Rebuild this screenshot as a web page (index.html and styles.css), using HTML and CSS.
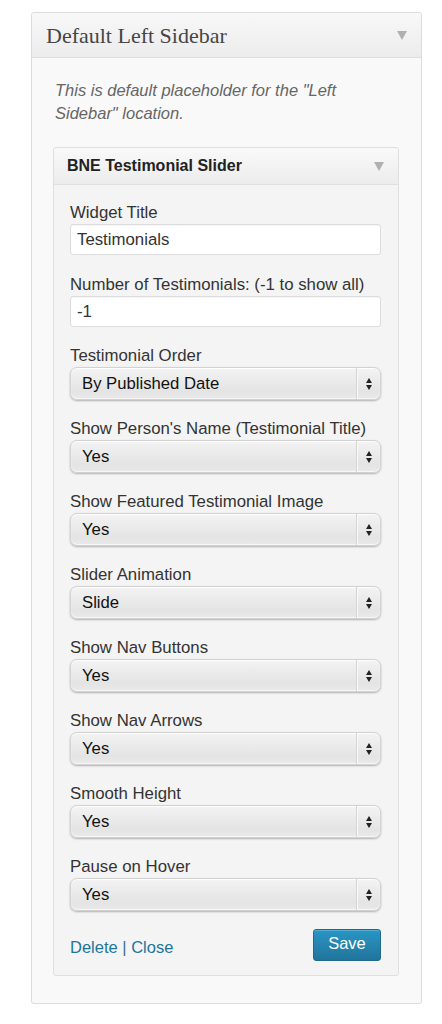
FILE: index.html
```html
<!DOCTYPE html>
<html>
<head>
<meta charset="utf-8">
<link rel="stylesheet" href="styles.css">
</head>
<body>
<div class="page">
  <div class="sidebar">
    <div class="sidebar-head">
      <h2 class="sidebar-title">Default Left Sidebar</h2>
      <span class="tri"></span>
    </div>
    <div class="sidebar-body">
      <p class="desc">This is default placeholder for the "Left Sidebar" location.</p>
      <div class="widget">
        <div class="widget-head">
          <h3 class="widget-title">BNE Testimonial Slider</h3>
          <span class="tri"></span>
        </div>
        <div class="widget-body">
          <div class="field f1">
            <label class="lbl">Widget Title</label>
            <div class="input">Testimonials</div>
          </div>
          <div class="field f2">
            <label class="lbl">Number of Testimonials: (-1 to show all)</label>
            <div class="input">-1</div>
          </div>
          <div class="field">
            <label class="lbl">Testimonial Order</label>
            <div class="select"><span class="sel-text">By Published Date</span><span class="sel-arrows"><i class="up"></i><i class="down"></i></span></div>
          </div>
          <div class="field">
            <label class="lbl">Show Person's Name (Testimonial Title)</label>
            <div class="select"><span class="sel-text">Yes</span><span class="sel-arrows"><i class="up"></i><i class="down"></i></span></div>
          </div>
          <div class="field">
            <label class="lbl">Show Featured Testimonial Image</label>
            <div class="select"><span class="sel-text">Yes</span><span class="sel-arrows"><i class="up"></i><i class="down"></i></span></div>
          </div>
          <div class="field">
            <label class="lbl">Slider Animation</label>
            <div class="select"><span class="sel-text">Slide</span><span class="sel-arrows"><i class="up"></i><i class="down"></i></span></div>
          </div>
          <div class="field">
            <label class="lbl">Show Nav Buttons</label>
            <div class="select"><span class="sel-text">Yes</span><span class="sel-arrows"><i class="up"></i><i class="down"></i></span></div>
          </div>
          <div class="field">
            <label class="lbl">Show Nav Arrows</label>
            <div class="select"><span class="sel-text">Yes</span><span class="sel-arrows"><i class="up"></i><i class="down"></i></span></div>
          </div>
          <div class="field">
            <label class="lbl">Smooth Height</label>
            <div class="select"><span class="sel-text">Yes</span><span class="sel-arrows"><i class="up"></i><i class="down"></i></span></div>
          </div>
          <div class="field last">
            <label class="lbl">Pause on Hover</label>
            <div class="select"><span class="sel-text">Yes</span><span class="sel-arrows"><i class="up"></i><i class="down"></i></span></div>
          </div>
          <div class="actions">
            <div class="links"><a class="link">Delete</a> <span class="sep">|</span> <a class="link">Close</a></div>
            <button class="save">Save</button>
          </div>
        </div>
      </div>
    </div>
  </div>
</div>
</body>
</html>
```

FILE: styles.css
```css
* { box-sizing: border-box; }
html, body { margin: 0; padding: 0; background: #fff; }
body { font-family: "Liberation Sans", Arial, sans-serif; color: #333; }
.page { padding: 12px 20px 0 31px; }

.sidebar {
  width: 391px;
  border: 1px solid #dcdcdc;
  border-radius: 3px;
  background: #f9f9f9;
  box-shadow: 0 1px 1px rgba(0,0,0,0.04);
}
.sidebar-head {
  height: 45px;
  display: flex;
  align-items: center;
  justify-content: space-between;
  padding: 0 14px 0 14px;
  background: linear-gradient(#f8f8f8, #ececec);
  border-bottom: 1px solid #dfdfdf;
  border-radius: 3px 3px 0 0;
}
.sidebar-title {
  margin: 0;
  font-family: "Liberation Serif", Georgia, serif;
  font-weight: normal;
  font-size: 22px;
  color: #464646;
  padding-top: 1px;
}
.tri {
  width: 0; height: 0;
  border-left: 5px solid transparent;
  border-right: 5px solid transparent;
  border-top: 9px solid #b0b0b0;
}
.sidebar-body { padding: 21px 21px 27px 21px; }
.desc {
  margin: 0 0 22px 2px;
  font-style: italic;
  font-size: 16.5px;
  line-height: 23px;
  color: #666;
}

.widget {
  width: 346px;
  border: 1px solid #dfdfdf;
  border-radius: 3px;
  background: #f4f4f4;
}
.widget-head {
  height: 37px;
  display: flex;
  align-items: center;
  justify-content: space-between;
  padding: 0 14px 0 13px;
  background: linear-gradient(#f9f9f9, #ececec);
  border-bottom: 1px solid #dfdfdf;
  border-radius: 3px 3px 0 0;
}
.widget-title {
  margin: 0;
  font-size: 16px;
  font-weight: bold;
  color: #222;
}
.widget-body { padding: 18px 17px 14px 16px; }

.field { margin-bottom: 19px; }
.field.f1 { margin-bottom: 20px; }
.field.f2 { margin-bottom: 19px; }
.lbl {
  display: block;
  font-size: 16.8px;
  line-height: 20px;
  color: #333;
  margin-bottom: 1px;
}
.input {
  height: 31px;
  background: #fff;
  border: 1px solid #dcdcdc;
  border-radius: 3px;
  padding: 0 6px;
  font-size: 16.8px;
  line-height: 29px;
  color: #333;
  box-shadow: inset 0 1px 1px rgba(0,0,0,0.04);
}

.select {
  height: 33px;
  display: flex;
  align-items: stretch;
  border-radius: 7px;
  background: linear-gradient(#f3f3f3 0%, #ebebeb 40%, #e4e4e4 75%, #e9e9e9 100%);
  box-shadow: 0 1px 2px rgba(0,0,0,0.28), inset 0 -1px 1px rgba(255,255,255,0.7), inset 0 1px 1px rgba(255,255,255,0.9);
  border: 1px solid #d2d2d2;
}
.sel-text {
  flex: 1;
  padding-left: 11px;
  font-size: 16.7px;
  line-height: 31px;
  color: #111;
}
.sel-arrows {
  width: 24px;
  border-left: 1px solid #d4d4d4;
  box-shadow: inset 1px 0 0 #fafafa;
  display: flex;
  flex-direction: column;
  align-items: center;
  justify-content: center;
  gap: 2px;
}
.sel-arrows i {
  display: block;
  width: 0; height: 0;
  border-left: 3.5px solid transparent;
  border-right: 3.5px solid transparent;
}
.sel-arrows .up { border-bottom: 5px solid #222; }
.sel-arrows .down { border-top: 5px solid #222; }

.field.last { margin-bottom: 18px; }
.actions {
  display: flex;
  align-items: center;
  justify-content: space-between;
}
.links { font-size: 16.5px; color: #21759b; padding-top: 5px; }
.link { color: #21759b; text-decoration: none; }
.sep { color: #3b6e8a; }
.save {
  width: 68px;
  height: 32px;
  border: 1px solid #1e6a8d;
  border-radius: 3px;
  background: linear-gradient(#2a95c5, #21759b);
  color: #fff;
  font-family: "Liberation Sans", Arial, sans-serif;
  font-size: 16.5px;
  padding: 0 0 3px 0;
  box-shadow: inset 0 1px 0 rgba(120,200,230,0.5);
}
```
